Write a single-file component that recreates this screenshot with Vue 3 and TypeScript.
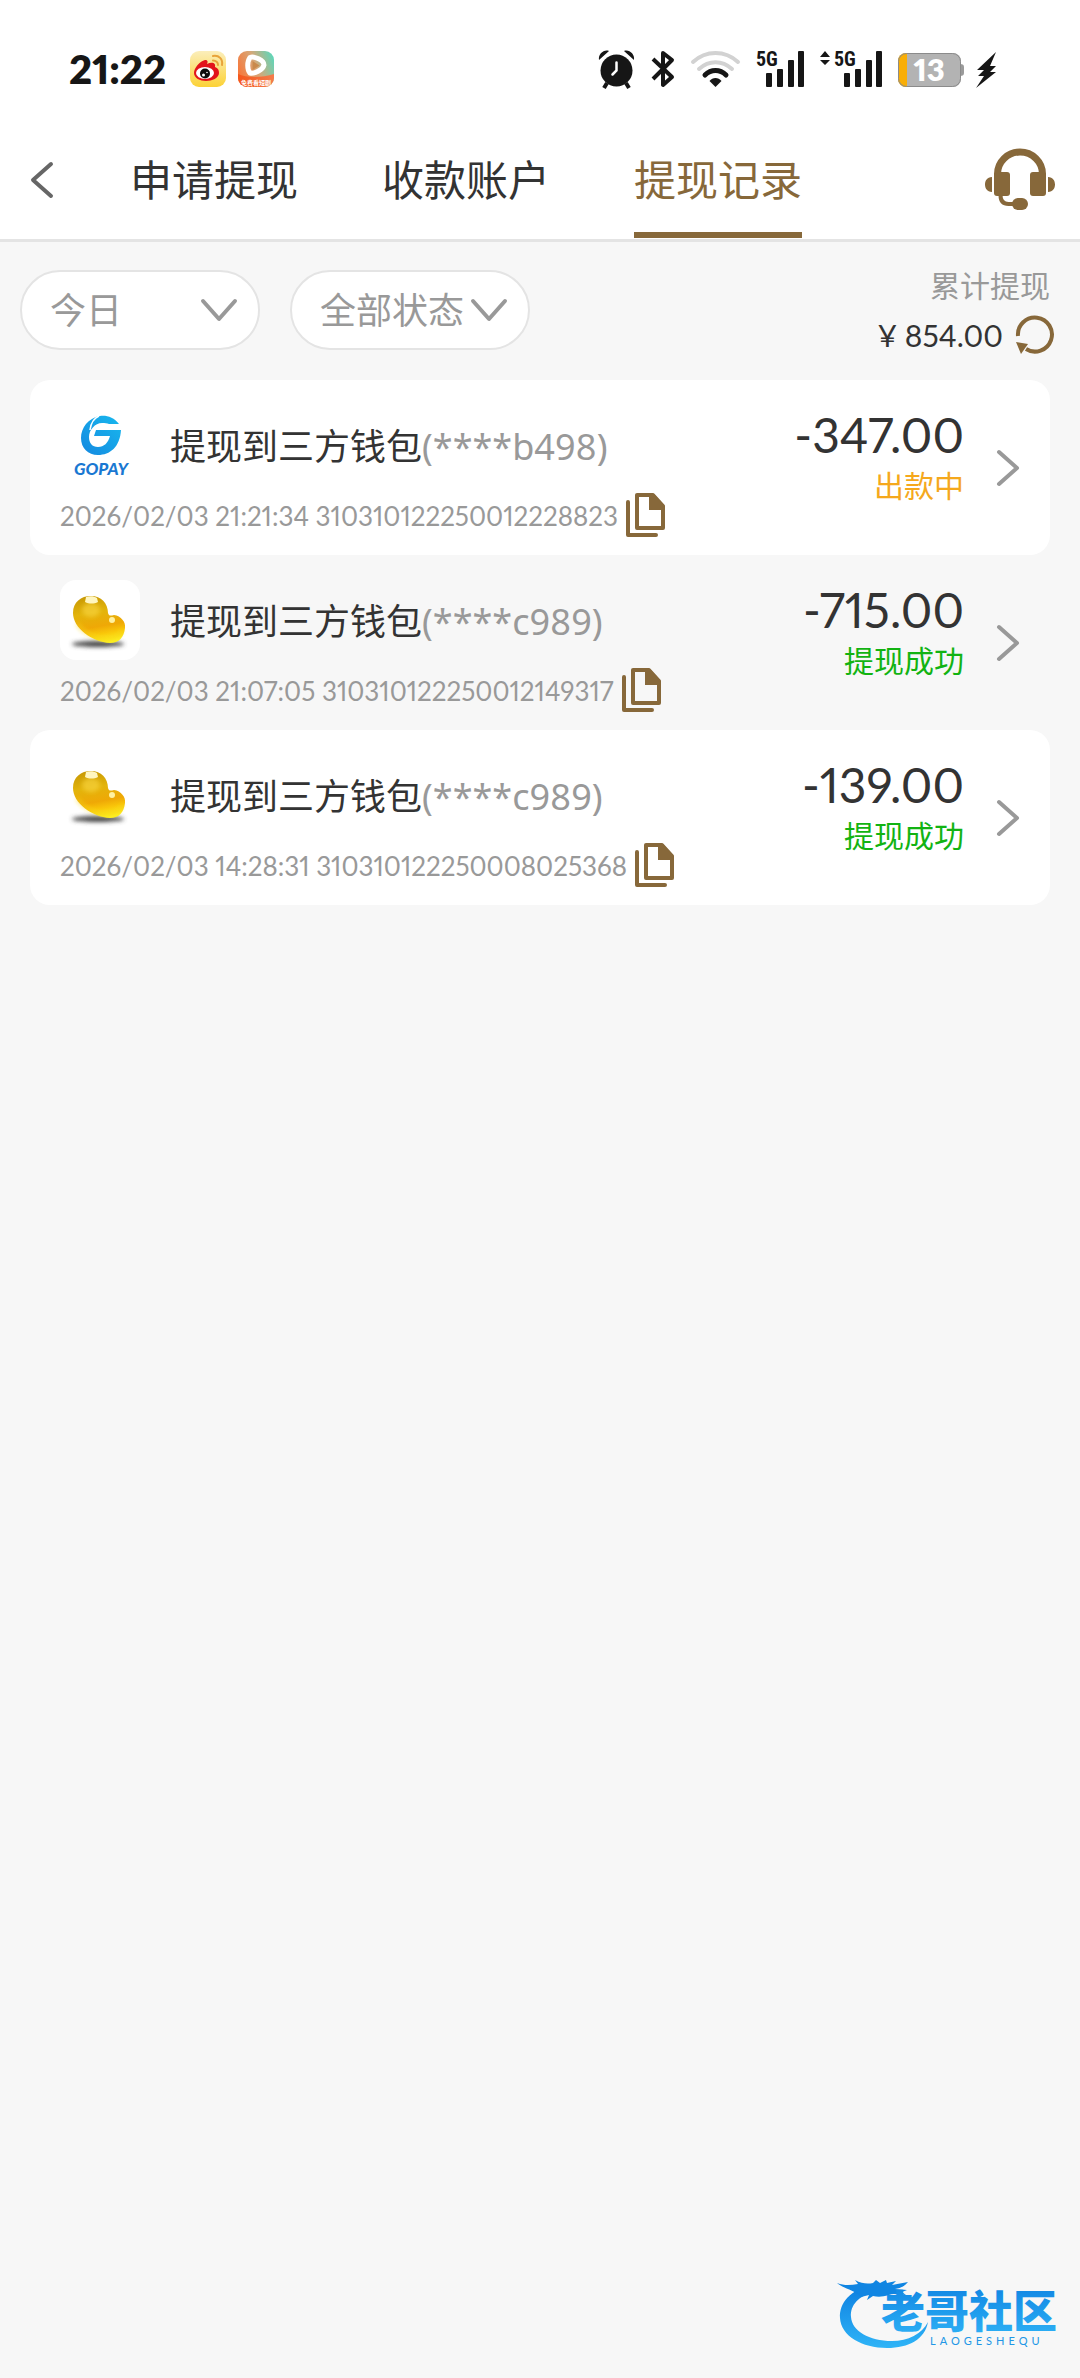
<script setup lang="ts">
import { ref } from 'vue'

type Wallet = 'gopay' | 'bean'
type Status = 'pending' | 'success'

interface WithdrawRecord {
  wallet: Wallet
  account: string
  time: string
  orderNo: string
  amount: string
  status: Status
}

const tabs: string[] = ['申请提现', '收款账户', '提现记录']
const activeTab = ref<number>(2)
const period = ref<string>('今日')
const state = ref<string>('全部状态')

const statusText: Record<Status, string> = {
  pending: '出款中',
  success: '提现成功',
}

const records: WithdrawRecord[] = [
  { wallet: 'gopay', account: '(****b498)', time: '2026/02/03 21:21:34', orderNo: '310310122250012228823', amount: '-347.00', status: 'pending' },
  { wallet: 'bean', account: '(****c989)', time: '2026/02/03 21:07:05', orderNo: '310310122250012149317', amount: '-715.00', status: 'success' },
  { wallet: 'bean', account: '(****c989)', time: '2026/02/03 14:28:31', orderNo: '310310122250008025368', amount: '-139.00', status: 'success' },
]
</script>

<template>
  <div class="page">
    <div class="status-bar">
      <div class="status-left">
        <span class="clock">21:22</span>
        <svg width="36" height="36" viewBox="0 0 36 36" aria-hidden="true">
          <defs>
            <linearGradient id="wb" x1="0" y1="0" x2="0" y2="1">
              <stop offset="0" stop-color="#fbeebb" />
              <stop offset="1" stop-color="#fcd236" />
            </linearGradient>
          </defs>
          <rect width="36" height="36" rx="9" fill="url(#wb)" />
          <path d="M4 22C4 17 10 10 15 9c3 0 3 2 2 4 4-2 9-2 8 3 3 1 4 3 4 6 0 5-7 8-13 8S4 27 4 22z" fill="#e2131b" />
          <ellipse cx="15" cy="22" rx="9" ry="6" fill="#fff" />
          <circle cx="15" cy="22.500" r="5" fill="#0d0d0d" />
          <circle cx="13.500" cy="24" r="1.500" fill="#fff" />
          <circle cx="17" cy="21.500" r=".8" fill="#fff" />
          <path d="M23 5c6-1 10 3 9 9M23 9.500c3 0 5 2 5 4.500" fill="none" stroke="#e8a33a" stroke-width="2" stroke-linecap="round" />
        </svg>
        <svg width="36" height="36" viewBox="0 0 36 36" aria-hidden="true">
          <defs>
            <linearGradient id="vd" x1="0" y1=".6" x2="1" y2=".2">
              <stop offset="0" stop-color="#f8773a" />
              <stop offset=".5" stop-color="#d6a878" />
              <stop offset="1" stop-color="#5fd6b9" />
            </linearGradient>
            <linearGradient id="vb" x1="0" y1="0" x2="1" y2="0">
              <stop offset="0" stop-color="#f4571c" />
              <stop offset="1" stop-color="#f57c4a" />
            </linearGradient>
            <clipPath id="vc"><rect width="36" height="36" rx="9" /></clipPath>
          </defs>
          <g clip-path="url(#vc)">
            <rect width="36" height="36" fill="url(#vd)" />
            <path d="M0 23c8 4 24 4 36 0v13H0z" fill="url(#vb)" />
            <path d="M12 6.500c-3 4-3 12 0 15.500 4 1 13-3 14-8 0-5-10-9-14-7.500z" fill="none" stroke="#fff" stroke-width="5" stroke-linejoin="round" />
            <path d="M14.500 10v9l7-4.500z" fill="#c98a4c" />
            <text x="18" y="34" text-anchor="middle" class="badge-text">免费看短剧</text>
          </g>
        </svg>
      </div>
      <div class="status-right">
        <svg width="37" height="38" viewBox="0 0 37 38" aria-hidden="true">
          <path d="M9 33l-3 5M28 33l3 5" stroke="#161616" stroke-width="4" />
          <circle cx="18.500" cy="20.500" r="16" fill="#161616" />
          <path d="M1 10C0 4 6-1 11 1zM36 10C37 4 31-1 26 1z" fill="#161616" />
          <path d="M18.500 12.500v8l-4 4" fill="none" stroke="#fff" stroke-width="2.500" stroke-linecap="round" />
        </svg>
        <svg width="24" height="38" viewBox="0 0 24 38" aria-hidden="true">
          <path d="M2 9l19 18-9 8V3l9 7L2 29" fill="none" stroke="#161616" stroke-width="4" stroke-linejoin="round" />
        </svg>
        <svg width="49" height="38" viewBox="0 0 49 38" aria-hidden="true">
          <g fill="none" stroke-width="4" stroke-linecap="round">
            <path d="M2 12c13-12 32-12 45 0M8 19c10-9 23-9 33 0" stroke="#d2d2d2" />
            <path d="M14 25c6-6 15-6 21 0" stroke="#161616" stroke-width="5" />
          </g>
          <path d="M24.500 37l-6-6c3-4 9-4 12 0z" fill="#161616" />
        </svg>
        <svg width="48" height="38" viewBox="0 0 48 38" aria-hidden="true">
          <text x="0" y="16" class="net-text">5G</text>
          <g fill="#161616">
            <rect x="10" y="23" width="6" height="14" rx="1" />
            <rect x="21" y="19" width="6" height="18" rx="1" />
            <rect x="32" y="10" width="6" height="27" rx="1" />
            <rect x="42" y="1" width="6" height="36" rx="1" />
          </g>
        </svg>
        <svg width="62" height="38" viewBox="0 0 62 38" aria-hidden="true">
          <path d="M0 7l5-6 5 6zM0 10l5 5 5-5z" fill="#161616" />
          <text x="14" y="16" class="net-text">5G</text>
          <g fill="#161616">
            <rect x="24" y="23" width="6" height="14" rx="1" />
            <rect x="35" y="19" width="6" height="18" rx="1" />
            <rect x="46" y="10" width="6" height="27" rx="1" />
            <rect x="56" y="1" width="6" height="36" rx="1" />
          </g>
        </svg>
        <div class="power">
          <svg width="66" height="38" viewBox="0 0 66 38" aria-hidden="true">
            <defs>
              <clipPath id="bc"><rect y="3" width="63" height="34" rx="8" /></clipPath>
            </defs>
            <path d="M62 14c3 0 4 1 4 3v6c0 2-1 3-4 3z" fill="#9a9a9a" />
            <g clip-path="url(#bc)">
              <rect y="3" width="63" height="34" fill="#b3b3b3" />
              <rect y="3" width="9" height="34" fill="#f9ae06" />
            </g>
            <rect x=".5" y="3.500" width="62" height="33" rx="8" fill="none" stroke="#8b8b8b" />
            <text x="31" y="31" text-anchor="middle" class="battery-text">13</text>
          </svg>
          <svg width="21" height="38" viewBox="0 0 21 38" aria-hidden="true">
            <path d="M20 2L1 20h7l-6 6h6L0 38l20-16h-6l6-6h-6z" fill="#161616" />
          </svg>
        </div>
      </div>
    </div>

    <header class="header">
      <button class="icon-btn back" type="button" aria-label="返回">
        <svg width="24" height="38" viewBox="0 0 24 38"><path d="M21 3L3 19l18 16" fill="none" stroke="#666" stroke-width="4" stroke-linecap="round" stroke-linejoin="round" /></svg>
      </button>
      <nav class="tabs">
        <button
          v-for="(tab, i) in tabs"
          :key="tab"
          type="button"
          class="tab"
          :class="{ active: i === activeTab }"
          @click="activeTab = i"
        >{{ tab }}</button>
      </nav>
      <button class="icon-btn" type="button" aria-label="客服">
        <svg width="70" height="62" viewBox="0 0 70 62">
          <g fill="#87683a">
            <rect x="9" y="23" width="16" height="24" rx="3" />
            <rect x="45" y="23" width="16" height="24" rx="3" />
            <path d="M7 28v15C2 43 0 39 0 35.500S2 28 7 28zM63 28v15c5 0 7-4 7-7.500S68 28 63 28z" />
            <rect x="27" y="49" width="16" height="12" rx="6" />
          </g>
          <path d="M12.500 28v-3a22.500 22 0 0 1 45 0v3" fill="none" stroke="#87683a" stroke-width="7" />
          <path d="M15.500 46c0 6 3 9 8 9h6" fill="none" stroke="#87683a" stroke-width="4" />
        </svg>
      </button>
    </header>

    <section class="filters">
      <div class="picker">
        <select v-model="period" aria-label="时间">
          <option>今日</option>
        </select>
        <svg class="caret" width="38" height="24" viewBox="0 0 38 24" aria-hidden="true"><path d="M3 3l16 18L35 3" fill="none" stroke="#999" stroke-width="4" stroke-linecap="round" stroke-linejoin="round" /></svg>
      </div>
      <div class="picker">
        <select v-model="state" aria-label="状态">
          <option>全部状态</option>
        </select>
        <svg class="caret" width="38" height="24" viewBox="0 0 38 24" aria-hidden="true"><path d="M3 3l16 18L35 3" fill="none" stroke="#999" stroke-width="4" stroke-linecap="round" stroke-linejoin="round" /></svg>
      </div>
      <div class="total">
        <div class="total-label">累计提现</div>
        <div class="total-row">
          <span class="total-value">¥ 854.00</span>
          <button class="icon-btn" type="button" aria-label="刷新">
            <svg width="40" height="38" viewBox="0 0 40 38"><path d="M3 20a17 17 0 1 1 8 13" fill="none" stroke="#87683a" stroke-width="4" /><path d="M1 26l12 2-7 10z" fill="#87683a" /></svg>
          </button>
        </div>
      </div>
    </section>

    <main class="records">
      <article v-for="r in records" :key="r.orderNo" class="record">
        <div class="info">
          <div class="title-row">
            <div class="avatar">
              <svg v-if="r.wallet === 'gopay'" width="80" height="80" viewBox="0 0 80 80" aria-hidden="true">
                <defs>
                  <linearGradient id="gp" x1="0" y1="1" x2="1" y2="0">
                    <stop offset="0" stop-color="#1488e0" />
                    <stop offset="1" stop-color="#18b9ee" />
                  </linearGradient>
                </defs>
                <path d="M59 19C54 12 46 10 40 11 28 13 21 23 21 33c0 10 7 17 17 17 12 0 22-8 23-25H36l-2 6h16c-2 7-6 11-12 11s-9-4-9-10c0-7 6-14 13-14 3 0 5 0 7 1z" fill="url(#gp)" />
                <path d="M30 25c1-7 4-12 9-14" fill="none" stroke="#fff" stroke-width="1.500" />
                <text x="41" y="70" text-anchor="middle" class="gopay-text">GOPAY</text>
              </svg>
              <svg v-else width="80" height="80" viewBox="0 0 80 80" aria-hidden="true">
                <defs>
                  <linearGradient :id="'bean' + r.orderNo" x1=".35" y1="0" x2=".55" y2="1">
                    <stop offset="0" stop-color="#c99a04" />
                    <stop offset=".35" stop-color="#e3b40c" />
                    <stop offset=".65" stop-color="#efa806" />
                    <stop offset=".8" stop-color="#f9c50a" />
                    <stop offset="1" stop-color="#fdf020" />
                  </linearGradient>
                  <filter :id="'soft' + r.orderNo" x="-30%" y="-80%" width="160%" height="260%"><feGaussianBlur stdDeviation="2" /></filter>
                </defs>
                <ellipse cx="38" cy="64" rx="26" ry="3" fill="#444" :filter="`url(#soft${r.orderNo})`" />
                <path d="M13 33c0-11 8-17 18-17s17 7 17 17c1 3 2 3 6 2 7 1 12 7 11 13-1 9-6 15-15 15-18-1-37-15-37-30z" :fill="`url(#bean${r.orderNo})`" />
                <ellipse cx="31" cy="30" rx="9" ry="7" fill="#f7d23a" opacity=".7" :filter="`url(#soft${r.orderNo})`" />
                <path d="M17 44c8 10 20 15 30 15 8 0 13-4 15-9" fill="none" stroke="#f8d81a" stroke-width="3" opacity=".6" :filter="`url(#soft${r.orderNo})`" />
                <path d="M26 17c3-1 8-1 11 1l1 4c-4 2-9 2-13 0z" fill="#fff6c0" />
                <ellipse cx="52" cy="40" rx="3" ry="3" fill="#fff1a0" />
              </svg>
            </div>
            <h2 class="title">提现到三方钱包<span class="account">{{ r.account }}</span></h2>
          </div>
          <div class="meta">
            <span>{{ r.time }} {{ r.orderNo }}</span>
            <button class="icon-btn" type="button" aria-label="复制">
              <svg width="39" height="44" viewBox="0 0 39 44">
                <path d="M2 9v33h28" fill="none" stroke="#87683a" stroke-width="4" stroke-linecap="round" stroke-linejoin="round" />
                <path d="M11 2h16l10 11v22H11z" fill="none" stroke="#87683a" stroke-width="4" stroke-linejoin="round" />
                <path d="M23 1h5l10 11v5H23z" fill="#87683a" />
              </svg>
            </button>
          </div>
        </div>
        <div class="result">
          <div class="amount">{{ r.amount }}</div>
          <div class="state" :class="r.status">{{ statusText[r.status] }}</div>
        </div>
        <button class="icon-btn" type="button" aria-label="详情">
          <svg width="24" height="38" viewBox="0 0 24 38"><path d="M3 3l18 16L3 35" fill="none" stroke="#999" stroke-width="4" stroke-linecap="round" stroke-linejoin="round" /></svg>
        </button>
      </article>
    </main>

    <footer class="footer">
      <svg width="226" height="80" viewBox="0 0 226 80" role="img" aria-label="老哥社区">
        <defs>
          <linearGradient id="lg" x1="0" y1="0" x2="0" y2="1">
            <stop offset="0" stop-color="#0d7fe0" />
            <stop offset="1" stop-color="#2fb4f7" />
          </linearGradient>
        </defs>
        <path d="M34 14C14 17 2 31 3 46c1 18 22 30 47 30 22 0 38-9 41-26-6 12-20 19-36 19-23 0-40-10-41-24-1-12 8-21 22-25z" fill="url(#lg)" />
        <path d="M0 11c8 3 14 2 21 1l-3-4c7 4 13 4 18 3l3-3 4 3 6-3 1 3 9-2-4 4 16-3c-4 5-8 6-13 7l12 1-5 2 4 3c-8 0-12-2-17 0-7 2-11 2-16 1l-6 4 2-5-8 2C18 18 7 17 0 11z" fill="#1085e2" />
        <text x="44" y="56" class="brand-text">老哥社区</text>
        <text x="93" y="73" class="brand-sub">LAOGESHEQU</text>
      </svg>
    </footer>
  </div>
</template>

<style>
body {
  background: #f7f7f7;
}
</style>

<style scoped>
.page {
  box-sizing: border-box;
  display: flex;
  flex-direction: column;
  min-height: 100vh;
  background: #f7f7f7;
  color: #333;
  font-family: Lato, "Noto Sans CJK SC", sans-serif;
  font-variant-numeric: proportional-nums;
}

svg {
  display: block;
  flex: none;
  overflow: visible;
}

button,
select {
  margin: 0;
  padding: 0;
  border: 0;
  background: none;
  color: inherit;
  font: inherit;
}

.icon-btn {
  flex: none;
  cursor: pointer;
}

.status-bar {
  display: flex;
  justify-content: space-between;
  align-items: center;
  height: 120px;
  padding: 18px 83px 0 69px;
  box-sizing: border-box;
  background: #fff;
}

.status-left,
.status-right {
  display: flex;
  align-items: center;
  gap: 16px;
}

.status-left {
  gap: 12px;
}

.clock {
  margin-right: 12px;
  color: #161616;
  font-size: 40px;
  font-weight: 800;
  line-height: 40px;
}

.power {
  display: flex;
  gap: 12px;
}

.badge-text {
  fill: #fff;
  font-size: 6px;
  font-weight: 700;
}

.net-text {
  fill: #161616;
  font-family: "Liberation Sans Narrow", "Roboto Condensed", Roboto, sans-serif;
  font-size: 20px;
  font-weight: 700;
}

.battery-text {
  fill: #fff;
  font-size: 31px;
  font-weight: 800;
}

.header {
  display: flex;
  align-items: center;
  height: 119px;
  padding: 0 25px 0 30px;
  border-bottom: 3px solid #e4e4e4;
  background: #fff;
}

.tabs {
  display: flex;
  flex: 1;
  gap: 84px;
  align-self: stretch;
  padding-left: 76px;
}

.tab {
  height: 118px;
  box-sizing: border-box;
  padding-top: 8px;
  border-bottom: 6px solid transparent;
  font-size: 42px;
  line-height: 104px;
  white-space: nowrap;
  cursor: pointer;
}

.tab.active {
  border-color: #87683a;
  color: #87683a;
}

.filters {
  display: flex;
  align-items: center;
  gap: 30px;
  box-sizing: border-box;
  height: 138px;
  padding: 0 25px 2px 20px;
}

.picker {
  position: relative;
  width: 240px;
}

.picker select {
  box-sizing: border-box;
  width: 100%;
  height: 80px;
  padding: 0 0 0 28px;
  border: 2px solid #e4e4e4;
  border-radius: 40px;
  background: #fff;
  color: #999;
  font-size: 36px;
  appearance: none;
}

.caret {
  position: absolute;
  top: 28px;
  right: 22px;
  pointer-events: none;
}

.total {
  display: flex;
  flex-direction: column;
  align-items: flex-end;
  margin-left: auto;
}

.total-label {
  padding-right: 5px;
  color: #999;
  font-size: 30px;
  line-height: 50px;
}

.total-row {
  display: flex;
  align-items: center;
  gap: 12px;
  height: 50px;
}

.total-value {
  font-size: 30px;
}

.records {
  padding: 0 30px;
}

.record {
  display: flex;
  align-items: center;
  box-sizing: border-box;
  height: 175px;
  padding: 0 30px;
  border-radius: 20px;
}

.record:nth-child(odd) {
  background: #fff;
}

.info {
  flex: 1;
  padding-top: 7px;
}

.title-row {
  display: flex;
  align-items: center;
  gap: 30px;
}

.avatar {
  border-radius: 16px;
  background: #fff;
}

.title {
  margin: 0;
  padding-top: 2px;
  font-size: 36px;
  font-weight: 400;
  line-height: 48px;
}

.account {
  color: #999;
  font-family: "Noto Sans", sans-serif;
}

.meta {
  display: flex;
  align-items: center;
  gap: 8px;
  margin-top: 8px;
  color: #999;
  font-size: 26px;
  line-height: 44px;
}

.meta span {
  padding-top: 2px;
  line-height: 42px;
}

.result {
  align-self: flex-start;
  padding: 27px 32px 0 0;
  text-align: right;
}

.amount {
  font-size: 48px;
  line-height: 56px;
}

.state {
  font-size: 30px;
  line-height: 44px;
}

.state.pending {
  color: #f5a81c;
}

.state.success {
  color: #12b312;
}

.gopay-text {
  fill: #1a78d2;
  font-size: 17px;
  font-style: italic;
  font-weight: 900;
}

.footer {
  display: flex;
  justify-content: flex-end;
  margin-top: auto;
  padding: 0 17px 26px 0;
}

.brand-text {
  fill: url(#lg);
  font-family: "Noto Sans CJK SC", sans-serif;
  font-size: 44px;
  font-weight: 900;
}

.brand-sub {
  fill: #2196e6;
  font-size: 11px;
  letter-spacing: 4px;
}
</style>
